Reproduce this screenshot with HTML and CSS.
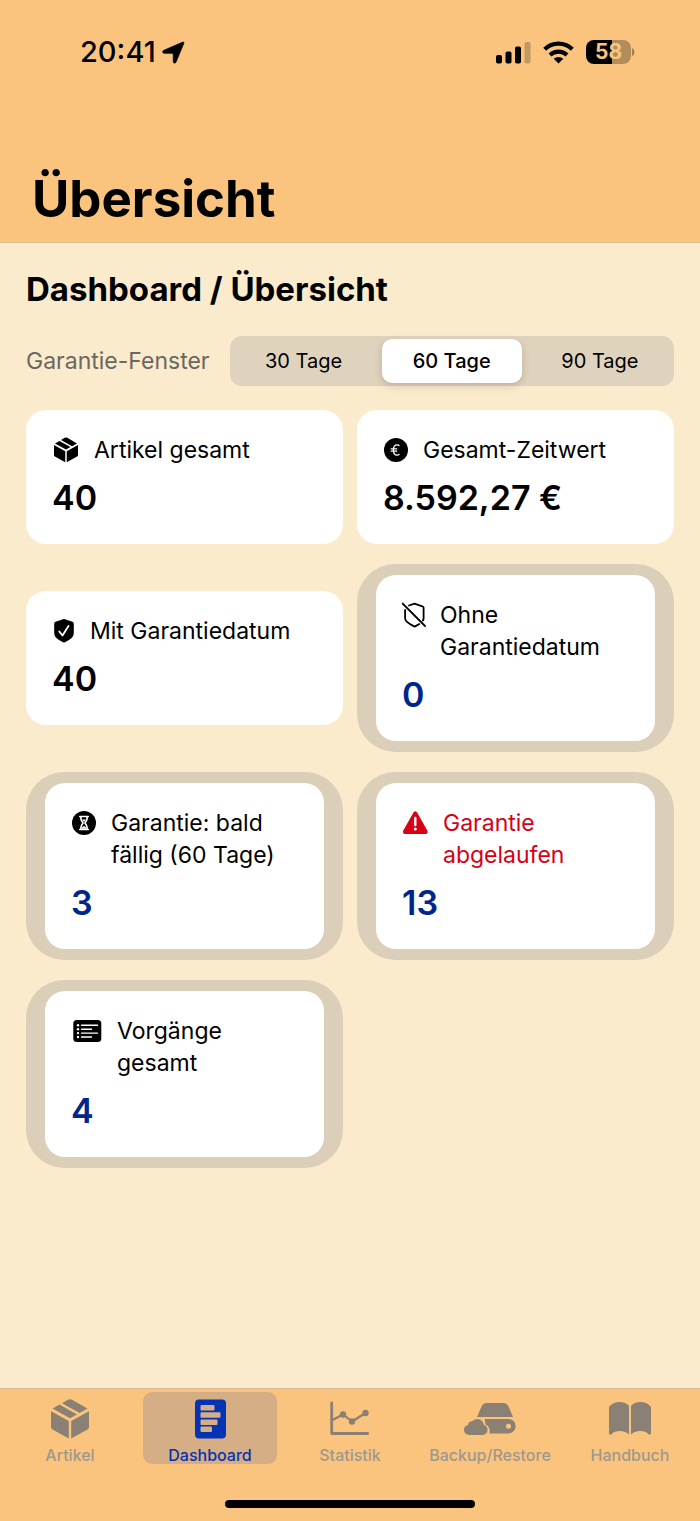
FILE: index.html
```html
<!DOCTYPE html>
<html lang="de">
<head>
<meta charset="utf-8">
<meta name="viewport" content="width=device-width, initial-scale=1">
<title>Übersicht</title>
<link rel="stylesheet" href="styles.css">
</head>
<body>
<svg class="defs" aria-hidden="true">
  <symbol id="box" viewBox="0 0 38 40">
    <path d="M0 12.2 17.8 22v17.4L1.5 30.4Q0 29.6 0 28zM38 12.2 20.2 22v17.4l16.3-9Q38 29.6 38 28zM1.6 9.6 8.500 5.600 26 15.400 19 19.200zM11 4.300 17 .8q2-1.100 4 0L36.400 9.600 28.600 14z"/>
  </symbol>
</svg>
<div class="screen">
  <header class="top">
    <div class="status">
      <div class="clock">
        <span>20:41</span>
        <svg width="23" height="23" viewBox="0 0 23 23" aria-hidden="true"><path d="M20.300 1.300Q22.600.3 21.700 2.600L14 21Q13.400 22.400 12.300 22.100 11.300 21.900 11.300 20.700L11.200 12.300 2.200 12.200Q.8 12.100.7 10.900.6 9.900 2 9.300z" stroke="#000" stroke-width=".8"/></svg>
      </div>
      <div class="signals">
        <svg width="35" height="23" viewBox="0 0 35 23" aria-hidden="true"><rect y="14" width="6" height="8.500" rx="1.800"/><rect x="9.500" y="10.500" width="6" height="12" rx="1.800"/><rect x="19" y="5.500" width="6" height="17" rx="1.800"/><rect x="28.500" y="1" width="6" height="21.500" rx="1.800" opacity=".22"/></svg>
        <svg width="31" height="23" viewBox="0 0 31 23" aria-hidden="true"><g fill="none" stroke="#000" stroke-width="4.200"><path d="M1.700 8.200a20 20 0 0 1 27.600 0"/><path d="M7 14a12.400 12.400 0 0 1 17 0"/></g><path d="M15.500 22.500 10.700 17.800a7 7 0 0 1 9.600 0z"/></svg>
        <div class="battery"><span class="battery-level">58</span><svg width="4" height="8" viewBox="0 0 4 8" aria-hidden="true"><path d="M1 0v8q2.500-1 2.500-4T1 0z" opacity=".35"/></svg></div>
      </div>
    </div>
    <h1 class="title">Übersicht</h1>
  </header>

  <main class="content">
    <h2 class="heading">Dashboard / Übersicht</h2>
    <div class="filter" role="radiogroup" aria-labelledby="filter-name">
      <span class="filter-name" id="filter-name">Garantie-Fenster</span>
      <div class="segments">
        <label class="segment"><input type="radio" name="window" value="30"><span>30 Tage</span></label>
        <label class="segment"><input type="radio" name="window" value="60" checked><span>60 Tage</span></label>
        <label class="segment"><input type="radio" name="window" value="90"><span>90 Tage</span></label>
      </div>
    </div>

    <div class="grid">
      <section class="card">
        <div class="label"><svg width="30" height="32" viewBox="0 0 30 32" aria-hidden="true"><use href="#box" x="2" y="3" width="24" height="26"/></svg><span>Artikel gesamt</span></div>
        <div class="value">40</div>
      </section>
      <section class="card">
        <div class="label"><svg width="28" height="32" viewBox="0 0 28 32" aria-hidden="true"><circle cx="13" cy="16" r="12"/><path d="M16.500 11.700q-1-.8-2.500-.8-3.600 0-3.600 5.100t3.600 5.100q1.500 0 2.500-.8M7.700 14.800h6.500M7.700 17.100h6.500" fill="none" stroke="#fff" stroke-width="1.300"/></svg><span>Gesamt-Zeitwert</span></div>
        <div class="value">8.592,27 €</div>
      </section>
      <section class="card">
        <div class="label"><svg width="26" height="32" viewBox="0 0 26 32" aria-hidden="true"><path d="M11 4.200q1-.4 2 0l7.500 2.600q1.300.5 1.300 1.900v9.300q0 3-2.200 5-3 2.700-6.600 4.300-1 .4-2 0-3.600-1.600-6.600-4.300-2.200-2-2.200-5V8.700q0-1.400 1.300-1.900z"/><path d="m7.300 16.500 3.200 4 6-9.600" fill="none" stroke="#fff" stroke-width="1.800" stroke-linecap="round" stroke-linejoin="round"/></svg><span>Mit Garantiedatum</span></div>
        <div class="value">40</div>
      </section>
      <button class="card-button" type="button">
        <span class="card">
          <span class="label"><svg width="26" height="32" viewBox="0 0 26 32" aria-hidden="true"><g fill="none" stroke="#000" stroke-width="1.800" stroke-linecap="round" stroke-linejoin="round"><path d="M.5 4.500 23 27M7 6.500 12.500 4.600l8.500 3.100q.6.300.6 1V19q0 1.500-.7 2.600M3.100 11v8q0 2.200 1.600 3.700 3 2.700 7.800 4.900 2.500-1 4.800-2.500"/></g></svg><span>Ohne Garantiedatum</span></span>
          <span class="value">0</span>
        </span>
      </button>
      <button class="card-button" type="button">
        <span class="card">
          <span class="label"><svg width="28" height="32" viewBox="0 0 28 32" aria-hidden="true"><circle cx="13" cy="16" r="12"/><path d="M8.700 9.500h8.600M8.700 22.500h8.600M9.800 9.500q-.2 4 2.300 6.500-2.500 2.500-2.300 6.500M16.200 9.500q.2 4-2.300 6.500 2.500 2.500 2.300 6.500" fill="none" stroke="#fff" stroke-width="1.500" stroke-linecap="round"/><path d="M10.500 21.800q.5-2 2.500-2.800 2 .8 2.500 2.800zM11 12.500h4L13 15z" fill="#fff"/></svg><span>Garantie: bald fällig (60 Tage)</span></span>
          <span class="value">3</span>
        </span>
      </button>
      <button class="card-button" type="button">
        <span class="card">
          <span class="label alert"><svg width="29" height="32" viewBox="0 0 29 32" aria-hidden="true"><path d="M11.500 5.500q1.800-2.700 3.600 0l10.200 17.900q1.200 3-1.800 3.600H3.100q-3-.6-1.800-3.600z"/><path d="M13.300 11v7" stroke="#fff" stroke-width="2.400" stroke-linecap="round"/><circle cx="13.300" cy="22" r="1.500" fill="#fff"/></svg><span>Garantie abgelaufen</span></span>
          <span class="value">13</span>
        </span>
      </button>
      <button class="card-button" type="button">
        <span class="card">
          <span class="label"><svg width="34" height="32" viewBox="0 0 34 32" aria-hidden="true"><rect x="2.300" y="5" width="28" height="22" rx="3.500"/><path d="M10.500 10.300h16M10.500 14.200h10M10.500 18.100h16M10.500 22h10" stroke="#fff" stroke-width="1.400" stroke-linecap="round"/><g fill="#fff"><circle cx="7" cy="10.300" r="1.200"/><circle cx="7" cy="14.200" r="1.200"/><circle cx="7" cy="18.100" r="1.200"/><circle cx="7" cy="22" r="1.200"/></g></svg><span>Vorgänge gesamt</span></span>
          <span class="value">4</span>
        </span>
      </button>
    </div>
  </main>

  <footer class="bottom">
    <nav class="tabs">
      <a class="tab" href="#artikel"><svg width="38" height="40" viewBox="0 0 38 40" aria-hidden="true"><use href="#box"/></svg><span>Artikel</span></a>
      <a class="tab active" href="#dashboard" aria-current="page"><svg width="31" height="40" viewBox="0 0 31 40" aria-hidden="true"><path fill-rule="evenodd" d="M4 .5h23q4 0 4 4v31q0 4-4 4H4q-4 0-4-4v-31q0-4 4-4zM6.500 6q-1 0-1 1v3.500q0 1 1 1h12q1 0 1-1V7q0-1-1-1zm0 7.200q-1 0-1 1v3.500q0 1 1 1h18q1 0 1-1v-3.500q0-1-1-1zm0 7.200q-1 0-1 1v3.500q0 1 1 1h15q1 0 1-1v-3.500q0-1-1-1zm0 7.200q-1 0-1 1v3.500q0 1 1 1h9.500q1 0 1-1v-3.500q0-1-1-1z"/></svg><span>Dashboard</span></a>
      <a class="tab" href="#statistik"><svg width="40" height="40" viewBox="0 0 40 40" aria-hidden="true"><g fill="none" stroke="#8a8073" stroke-linecap="round" stroke-linejoin="round"><path stroke-width="2.800" d="M1.700 4v30.500h36"/><path stroke-width="2.200" d="m2.500 21 10.500-5.500 9 7L35.500 14"/></g><circle cx="13" cy="15.500" r="3.200"/><circle cx="22" cy="22.500" r="3.200"/><circle cx="35.500" cy="14" r="3.200"/></svg><span>Statistik</span></a>
      <a class="tab" href="#backup"><svg width="52" height="40" viewBox="0 0 52 40" aria-hidden="true"><path d="M17.500 7.500Q19 4 22.500 4h17q3.500 0 5 3.500L49 18H13z"/><path d="M20.500 20H44.500a7.200 7.200 0 0 1 0 14.400H25.500q1-7-4-9-.3-3-1-5.400zM44.500 24.800a2.500 2.500 0 1 0 0 5 2.500 2.500 0 0 0 0-5z" fill-rule="evenodd"/><path d="M5.500 36Q0 35.500 0 30.700q0-3.700 4-4.700.5-3.500 4-3.700Q10.500 20 13.500 20q5.300.3 6.500 6 3.500 1.200 3.500 4.800-.2 4.900-5 5.200z"/></svg><span>Backup/Restore</span></a>
      <a class="tab" href="#handbuch"><svg width="42" height="40" viewBox="0 0 42 40" aria-hidden="true"><path d="M20 7v28.500q-3-3.500-9.500-3.500-5 0-8 3.200-2.500 1.300-2.500-1V8q4-5 10.500-5T20 7zM22 7v28.500q3-3.500 9.500-3.500 5 0 8 3.200 2.500 1.300 2.500-1V8q-4-5-10.500-5T22 7z"/></svg><span>Handbuch</span></a>
    </nav>
    <div class="home-bar"></div>
  </footer>
</div>
</body>
</html>
```
FILE: styles.css
```css
* { box-sizing: border-box; }

body {
  margin: 0;
  background: #faebcd;
  color: #000;
  font-family: Inter, "Liberation Sans", sans-serif;
  font-size: 23px;
  line-height: 32px;
}

h1, h2 { margin: 0; }

.defs {
  position: absolute;
  width: 0;
  height: 0;
}

.screen {
  display: flex;
  flex-direction: column;
  min-height: 100vh;
}

.top {
  padding: 32px 32px 11px;
  background: #fac47f;
  border-bottom: 1px solid #d8bc93;
}

.status {
  display: flex;
  justify-content: space-between;
  align-items: center;
  height: 40px;
  padding: 0 33px 0 48px;
}

.clock {
  display: flex;
  align-items: center;
  gap: 6px;
  font-size: 29px;
  font-weight: 500;
}

.signals {
  display: flex;
  align-items: center;
  gap: 12px;
}

.battery {
  display: flex;
  align-items: center;
}

.battery-level {
  width: 45px;
  border-radius: 8px;
  background: linear-gradient(90deg, #000 58%, #b28d5c 58%);
  color: #fac47f;
  font-size: 21px;
  font-weight: 700;
  line-height: 24px;
  text-align: center;
}

.title {
  margin-top: 95px;
  font-size: 51px;
  font-weight: 700;
  line-height: 64px;
}

.content {
  flex: 1;
  padding: 26px 26px 40px;
}

.heading {
  font-size: 33px;
  font-weight: 700;
  line-height: 40px;
}

.filter {
  display: flex;
  align-items: center;
  gap: 20px;
  margin: 27px 0 24px;
}

.filter-name { color: #6b675f; }

.segments {
  flex: 1;
  display: grid;
  grid-template-columns: repeat(3, 1fr);
  padding: 3px 0;
  border-radius: 12px;
  background: #e0d3bd;
}

.segment {
  margin: 0 4px;
  font-size: 20px;
  text-align: center;
  cursor: pointer;
}

.segment input {
  position: absolute;
  opacity: 0;
}

.segment span {
  display: block;
  border-radius: 10px;
  line-height: 44px;
}

.segment input:checked + span {
  background: #fff;
  font-weight: 500;
  box-shadow: 0 3px 8px rgba(0, 0, 0, .16);
}

.grid {
  display: grid;
  grid-template-columns: repeat(2, 1fr);
  align-items: center;
  gap: 20px 14px;
}

.card {
  display: block;
  padding: 24px 26px 26px;
  border-radius: 20px;
  background: #fff;
}

.card-button {
  padding: 11px 19px;
  border: 0;
  border-radius: 38px;
  background: #dccfb9;
  color: inherit;
  font: inherit;
  text-align: left;
  cursor: pointer;
}

.label {
  display: flex;
  align-items: flex-start;
  gap: 12px;
}

.label svg { flex: none; }

.alert {
  color: #d70015;
  fill: #d70015;
}

.value {
  display: block;
  margin-top: 12px;
  font-size: 34px;
  font-weight: 600;
  line-height: 40px;
}

.card-button .value { color: #00268c; }

.bottom {
  padding: 3px 0 13px;
  background: #fac47f;
  border-top: 1px solid #d8bc93;
}

.tabs {
  display: grid;
  grid-template-columns: repeat(5, 1fr);
}

.tab {
  display: flex;
  flex-direction: column;
  align-items: center;
  gap: 8px;
  margin: 0 3px;
  padding-top: 7px;
  border-radius: 9px;
  color: #a0988c;
  fill: #8a8073;
  font-size: 16px;
  font-weight: 500;
  line-height: 17px;
  text-decoration: none;
}

.active {
  background: #d6ae85;
  color: #0433b4;
  fill: #0433b4;
}

.home-bar {
  width: 250px;
  height: 8px;
  margin: 36px auto 0;
  border-radius: 4px;
  background: #000;
}
```
